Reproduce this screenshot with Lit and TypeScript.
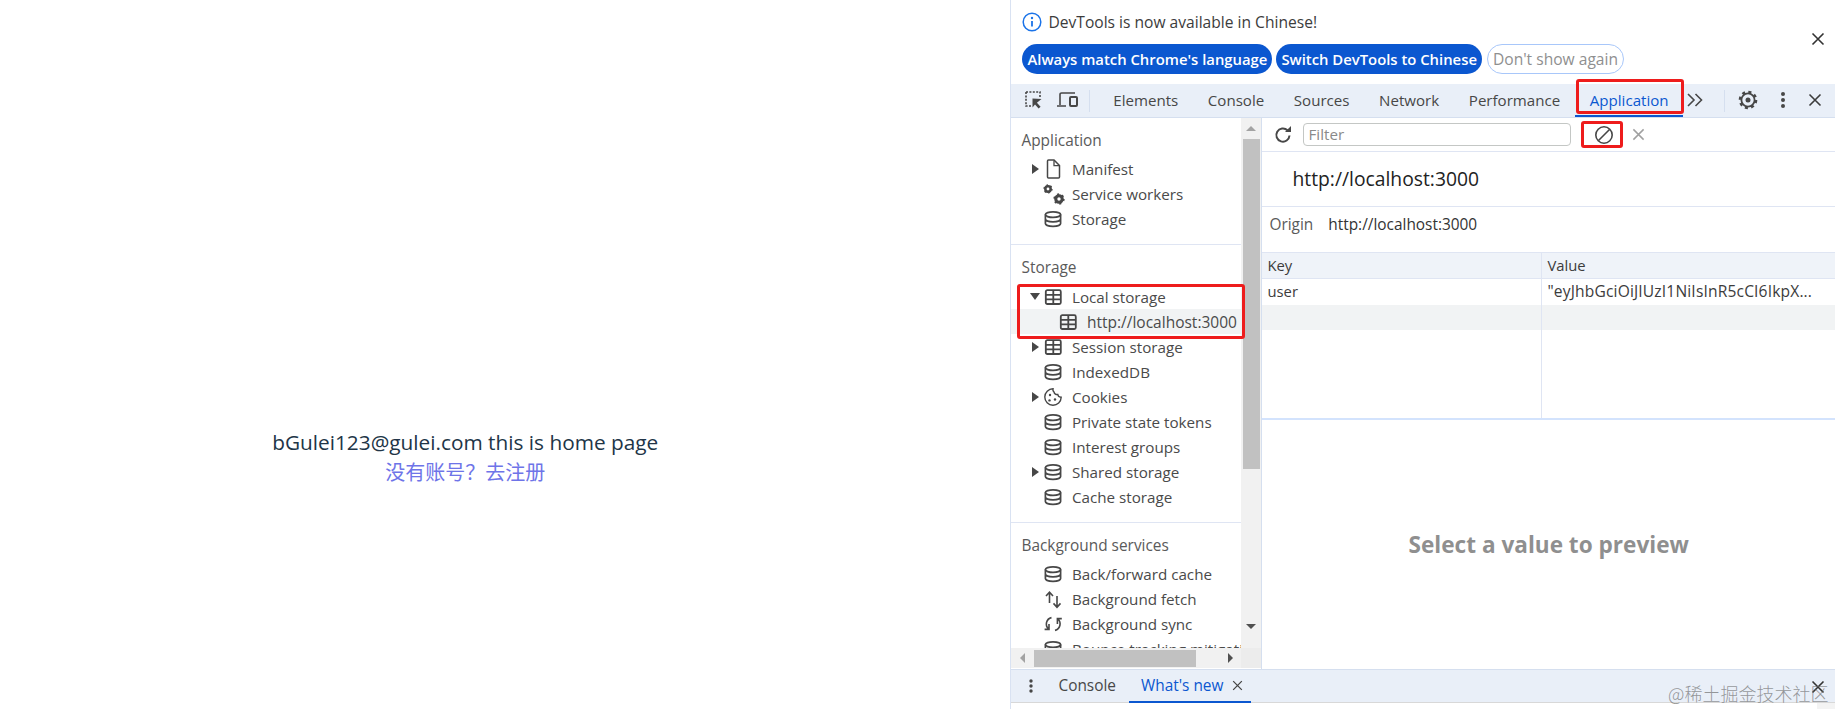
import { LitElement, html, css, svg } from "lit";
import { customElement } from "lit/decorators.js";

const s = "#474747";

const gear = (cx: number, cy: number, r: number, w: number) => svg`<circle cx=${cx} cy=${cy} r=${r * 0.58} fill="none" stroke=${s} stroke-width=${r * 0.55}/><circle cx=${cx} cy=${cy} r=${r * 0.85} fill="none" stroke=${s} stroke-width=${r * 0.32} stroke-dasharray=${`${w} ${r * 0.85 * 1.047 - w}`}/>`;

const db = svg`<ellipse cx="9" cy="4.6" rx="7.6" ry="2.8" fill="none" stroke=${s} stroke-width="1.7"/><path d="M1.4 4.6v9c0 1.5 3.4 2.8 7.6 2.8s7.6-1.3 7.6-2.8v-9M1.4 9.1c0 1.5 3.4 2.8 7.6 2.8s7.6-1.3 7.6-2.8" fill="none" stroke=${s} stroke-width="1.7"/>`;
const table = svg`<rect x="1.8" y="2.2" width="15" height="13.8" rx="1.5" fill="none" stroke=${s} stroke-width="1.8"/><path d="M1.8 6.9h15M1.8 11.4h15M9.3 2.2V16" stroke=${s} stroke-width="1.8"/>`;
const doc = svg`<path d="M4.5 0H10l5.5 5.5V17a1 1 0 0 1-1 1H4.5a1 1 0 0 1-1-1V1a1 1 0 0 1 1-1z" fill="none" stroke=${s} stroke-width="1.5"/><path d="M10 .5v5.2h5.2" fill="none" stroke=${s} stroke-width="1.3"/>`;
const gears = svg`${gear(4, 4, 4.6, 1.6)}${gear(15, 14, 5.6, 2)}`;
const cookie = svg`<path d="M9 .8a8.2 8.2 0 1 0 8.2 8.4 3.2 3.2 0 0 1-3.4-2.7 3.2 3.2 0 0 1-3.8-2.5A3.2 3.2 0 0 1 9 .8z" fill="none" stroke=${s} stroke-width="1.4"/><circle cx="6" cy="7" r="1.2" fill=${s}/><circle cx="5.5" cy="12.4" r="1.2" fill=${s}/><circle cx="11" cy="11.5" r="1.2" fill=${s}/>`;
const fetchIc = svg`<path d="M5.5 13V2.5M2 6l3.5-3.8L9 6M13 6v11M9.5 13.4l3.5 3.8 3.5-3.8" fill="none" stroke=${s} stroke-width="1.6"/>`;
const sync = svg`<path d="M7.5 2.6A6.6 6.6 0 0 0 4.6 14M5 9v5.4H.6M11 15.4A6.6 6.6 0 0 0 13.8 4M13.4 9V3.6h4.4" fill="none" stroke=${s} stroke-width="1.6"/>`;

const ic = (c: unknown) => html`<svg class="ic" width="18" height="18" viewBox="0 0 18 18">${c}</svg>`;
const xIcon = (cls: string) => html`<svg class=${cls} viewBox="0 0 14 14"><path d="M1.5 1.5l11 11M12.5 1.5l-11 11" fill="none" stroke="currentColor" stroke-width="1.6"/></svg>`;

interface Row { t: string; i: unknown; arrow?: "r" | "d"; }
const rows1: Row[] = [
  { t: "Manifest", i: doc, arrow: "r" },
  { t: "Service workers", i: gears },
  { t: "Storage", i: db },
];
const rows2: Row[] = [
  { t: "Session storage", i: table, arrow: "r" },
  { t: "IndexedDB", i: db },
  { t: "Cookies", i: cookie, arrow: "r" },
  { t: "Private state tokens", i: db },
  { t: "Interest groups", i: db },
  { t: "Shared storage", i: db, arrow: "r" },
  { t: "Cache storage", i: db },
];
const rows3: Row[] = [
  { t: "Back/forward cache", i: db },
  { t: "Background fetch", i: fetchIc },
  { t: "Background sync", i: sync },
  { t: "Bounce tracking mitigations", i: db },
];

@customElement("app-root")
export class AppRoot extends LitElement {
  static styles = css`
    :host { display: block; width: 1835px; height: 709px; overflow: hidden; position: relative; font-family: "Open Sans", "Noto Sans CJK SC", sans-serif; background: #fff; }
    .wrap { display: flex; height: 709px; }
    .page { width: 1011px; box-sizing: border-box; padding: 427px 80px 0 0; display: flex; flex-direction: column; align-items: center; }
    .page .a { font-size: 20.8px; line-height: 30px; color: #213547; white-space: nowrap; }
    .page .b { font-size: 20px; line-height: 30px; padding-top: 1px; color: #6e74e8; white-space: nowrap; }
    .dt { width: 824px; border-left: 1px solid #d9e2f2; display: flex; flex-direction: column; font-size: 14px; color: #474747; }
    .info { height: 84px; flex: none; box-sizing: border-box; padding: 12px 0 0 11px; position: relative; }
    .info .msg { display: flex; align-items: center; gap: 6px; height: 20px; font-size: 15.6px; color: #3c3c3c; }
    .btns { display: flex; gap: 4px; margin-top: 12px; }
    .btn { height: 30px; border-radius: 15px; background: #0b57d0; color: #fff; font-size: 14.85px; font-weight: 600; padding: 0 5px; display: flex; align-items: center; white-space: nowrap; box-sizing: border-box; }
    .btn.o { background: #fff; border: 1px solid #a8c7fa; color: #8f8f8f; font-weight: 400; font-size: 15.6px; padding: 0 5px; margin-left: 1px; }
    .info .x { position: absolute; right: 10px; top: 32px; width: 14px; height: 14px; color: #333; }
    .tabs { height: 34px; flex: none; box-sizing: border-box; background: #e9eff8; border-bottom: 1px solid #d5dfef; display: flex; align-items: center; position: relative; }
    .tool { display: flex; align-items: center; justify-content: center; flex: none; margin-bottom: 1px; }
    .tool .tx { width: 14px; height: 14px; color: #3c3c3c; }
    .sep { width: 1px; height: 22px; background: #d5dfef; flex: none; }
    .tab { padding: 0 14.8px 2px; height: 33px; display: flex; align-items: center; font-size: 15.1px; color: #474747; box-sizing: border-box; white-space: nowrap; flex: none; }
    .tab.on { color: #0b57d0; border-bottom: 2px solid #0b57d0; padding-bottom: 0; }
    .main { flex: 0 0 551px; height: 551px; display: flex; overflow: hidden; }
    .side { width: 250px; flex: none; display: flex; flex-direction: column; border-right: 1px solid #d5dfef; box-sizing: content-box; }
    .sidetop { display: flex; height: 530px; }
    .tree { width: 230px; height: 530px; overflow: hidden; flex: none; }
    .sec { border-bottom: 1px solid #dfe5f3; padding-bottom: 13px; }
    .sec.last { border: 0; }
    .sec h4 { margin: 0; padding: 11px 0 0 10px; height: 38px; box-sizing: border-box; font-weight: 400; font-size: 15.4px; color: #5a5a5a; line-height: 24px; }
    .sec.s2 h4 { height: 39px; }
    .row { height: 25px; display: flex; align-items: center; white-space: nowrap; font-size: 15.2px; color: #4a4a4a; padding-left: 21px; }
    .row.child { padding-left: 36px; background: #f1f3f4; font-size: 15.5px; }
    .row .arr { width: 12px; flex: none; display: flex; }
    .row .ic { flex: none; margin-right: 9.5px; overflow: visible; }
    .tri { width: 0; height: 0; border-top: 5px solid transparent; border-bottom: 5px solid transparent; border-left: 7px solid #474747; }
    .tri.d { border-left: 5px solid transparent; border-right: 5px solid transparent; border-top: 7px solid #474747; border-bottom: 0; margin-left: -2px; }
    .vbar { width: 20px; flex: none; background: #f1f1f1; display: flex; flex-direction: column; align-items: center; }
    .vbar .up { height: 21px; display: flex; align-items: center; }
    .vbar .thumb { width: 17px; height: 330px; background: #c1c1c1; }
    .vbar .sp { flex: 1; }
    .vbar .dn { height: 24px; display: flex; align-items: flex-start; }
    .t1 { width: 0; height: 0; border-left: 5px solid transparent; border-right: 5px solid transparent; border-bottom: 5px solid #a3a3a3; }
    .t2 { width: 0; height: 0; border-left: 5px solid transparent; border-right: 5px solid transparent; border-top: 5px solid #505050; }
    .hbar { height: 20px; background: #f1f1f1; display: flex; align-items: center; }
    .hbar .l { width: 23px; display: flex; justify-content: center; }
    .hbar .th { width: 162px; height: 17px; background: #c1c1c1; }
    .hbar .sp { width: 45px; display: flex; justify-content: flex-end; padding-right: 8px; box-sizing: border-box; }
    .hbar .cn { width: 20px; height: 20px; background: #ececec; }
    .tl { width: 0; height: 0; border-top: 5px solid transparent; border-bottom: 5px solid transparent; border-right: 5px solid #a3a3a3; }
    .tr { width: 0; height: 0; border-top: 5px solid transparent; border-bottom: 5px solid transparent; border-left: 5px solid #505050; }
    .pane { flex: 1; display: flex; flex-direction: column; min-width: 0; }
    .ptool { height: 34px; flex: none; box-sizing: border-box; border-bottom: 1px solid #dfe5f3; display: flex; align-items: center; padding-left: 11px; }
    .filter { margin-left: 10px; width: 268px; height: 23px; box-sizing: border-box; border: 1px solid #c4c7c5; border-radius: 4px; padding-left: 4px; font-size: 15.2px; line-height: 21px; color: #8a8a8a; }
    .ptool .block { margin-left: 23px; width: 20px; height: 20px; }
    .ptool .cx { margin-left: 18px; width: 13px; height: 13px; color: #a0a0a0; }
    .ptitle { height: 55px; flex: none; box-sizing: border-box; border-bottom: 1px solid #dfe5f3; padding: 0 0 2px 30px; display: flex; align-items: center; font-size: 19.3px; color: #222; }
    .origin { height: 45px; flex: none; display: flex; align-items: center; padding: 0 0 11px 7px; box-sizing: border-box; font-size: 15.4px; gap: 15px; color: #5a5a5a; }
    .origin span + span { color: #333; }
    .tbl { height: 168px; flex: none; box-sizing: border-box; border-bottom: 2px solid #d3e3fd; display: grid; grid-template-columns: 280px 1fr; grid-template-rows: 26px 26px 25px 1fr; border-top: 1px solid #dfe5f3; font-size: 14.8px; }
    .c { display: flex; align-items: center; padding: 0 0 2px 5px; box-sizing: border-box; color: #3c3c3c; white-space: nowrap; overflow: hidden; }
    .c.l { border-right: 1px solid #dfe5f3; }
    .c.h { background: #eff3f9; border-bottom: 1px solid #dfe5f3; }
    .c.g { background: #f1f3f4; }
    .c.v { font-size: 15.6px; letter-spacing: .15px; }
    .preview { flex: 1; display: flex; align-items: center; justify-content: center; font-size: 22.6px; font-weight: 700; color: #8f8f8f; box-sizing: border-box; white-space: nowrap; }
    .drawer { height: 34px; flex: none; box-sizing: border-box; background: #e9eff8; border-top: 1px solid #d5dfef; border-bottom: 1px solid #d8d8d8; display: flex; align-items: center; position: relative; }
    .drawer .dots { margin-left: 18px; width: 4px; height: 14px; }
    .drawer .dc { margin-left: 25px; font-size: 15.4px; color: #474747; padding-bottom: 2px; }
    .drawer .wn { margin-left: 13px; width: 122px; height: 33px; box-sizing: border-box; border-bottom: 2px solid #0b57d0; display: flex; align-items: center; padding-left: 12px; gap: 9px; font-size: 15.4px; color: #0b57d0; white-space: nowrap; }
    .drawer .wn svg { width: 11px; height: 11px; color: #444; }
    .drawer .dx { position: absolute; right: 10px; top: 10px; width: 14px; height: 14px; color: #333; }
    .strip { flex: 1; display: flex; justify-content: flex-end; }
    .strip div { width: 18px; background: #f3f3f3; }
    .mark { position: absolute; left: 1668px; top: 681px; font-size: 18px; line-height: 24px; color: rgba(110, 110, 110, .7); white-space: nowrap; font-family: "Noto Sans CJK SC", sans-serif; font-weight: 300; }
    .red { position: absolute; border: 3px solid #ee1c1c; border-radius: 3px; box-sizing: border-box; pointer-events: none; }
    .r1 { left: 1576px; top: 79px; width: 108px; height: 35px; }
    .r2 { left: 1581px; top: 121px; width: 42px; height: 27px; }
    .r3 { left: 1017px; top: 284px; width: 228px; height: 55px; }
  `;

  private row(r: Row) {
    return html`<div class="row"><span class="arr">${r.arrow ? html`<span class="tri ${r.arrow === "d" ? "d" : ""}"></span>` : ""}</span>${ic(r.i)}<span>${r.t}</span></div>`;
  }

  render() {
    return html`
      <div class="wrap">
        <div class="page">
          <div class="a">bGulei123@gulei.com this is home page</div>
          <div class="b">没有账号？去注册</div>
        </div>
        <div class="dt">
          <div class="info">
            <div class="msg">
              <svg width="20" height="20" viewBox="0 0 20 20"><circle cx="10" cy="10" r="8.8" fill="none" stroke="#1a73e8" stroke-width="1.5"/><path d="M10 9v5.5" stroke="#1a73e8" stroke-width="1.8"/><circle cx="10" cy="6" r="1.2" fill="#1a73e8"/></svg>
              <span>DevTools is now available in Chinese!</span>
            </div>
            <div class="btns">
              <div class="btn">Always match Chrome's language</div>
              <div class="btn">Switch DevTools to Chinese</div>
              <div class="btn o">Don't show again</div>
            </div>
            ${xIcon("x")}
          </div>
          <div class="tabs">
            <div class="tool" style="width:20px;margin-left:13px">
              <svg width="20" height="20" viewBox="0 0 20 20"><path d="M2 2h14v6M2 2v14h6" fill="none" stroke="#474747" stroke-width="1.6" stroke-dasharray="2 1.4"/><path d="M18 9.5L9 9v9l2.5-3 3.6 4 2-1.7-3.7-4z" transform="translate(-.5 -.5)" fill="#474747"/></svg>
            </div>
            <div class="tool" style="width:24px;margin-left:12px">
              <svg width="22" height="20" viewBox="0 0 22 20"><path d="M0 16h9M3 15V4.5A1.5 1.5 0 0 1 4.5 3H18" fill="none" stroke="#474747" stroke-width="1.6"/><rect x="13" y="7" width="7" height="9" rx="1" fill="none" stroke="#474747" stroke-width="2"/></svg>
            </div>
            <div class="sep" style="margin:0 8px 0 9px"></div>
            <div class="tab">Elements</div>
            <div class="tab">Console</div>
            <div class="tab">Sources</div>
            <div class="tab">Network</div>
            <div class="tab">Performance</div>
            <div class="tab on">Application</div>
            <div class="tool" style="width:16px;margin-left:4px">
              <svg width="16" height="14" viewBox="0 0 16 14"><path d="M1 1l6 6-6 6M8.5 1l6 6-6 6" fill="none" stroke="#474747" stroke-width="1.6"/></svg>
            </div>
            <div class="sep" style="margin-left:21px"></div>
            <div class="tool" style="width:20px;margin-left:13px">
              <svg width="20" height="20" viewBox="0 0 20 20"><circle cx="10" cy="10" r="6.6" fill="none" stroke="#474747" stroke-width="1.8"/><circle cx="10" cy="10" r="8" fill="none" stroke="#474747" stroke-width="2.6" stroke-dasharray="3 3.3"/><circle cx="10" cy="10" r="2.5" fill="#474747"/></svg>
            </div>
            <div class="tool" style="width:4px;margin-left:23px">
              <svg width="4" height="16" viewBox="0 0 4 16"><circle cx="2" cy="2" r="2" fill="#474747"/><circle cx="2" cy="8" r="2" fill="#474747"/><circle cx="2" cy="14" r="2" fill="#474747"/></svg>
            </div>
            <div class="tool" style="margin-left:23px">${xIcon("tx")}</div>
          </div>
          <div class="main">
            <div class="side">
              <div class="sidetop">
                <div class="tree">
                  <div class="sec"><h4>Application</h4>${rows1.map((r) => this.row(r))}</div>
                  <div class="sec s2"><h4>Storage</h4>
                    ${this.row({ t: "Local storage", i: table, arrow: "d" })}
                    <div class="row child"><span class="arr"></span>${ic(table)}<span>http://localhost:3000</span></div>
                    ${rows2.map((r) => this.row(r))}
                  </div>
                  <div class="sec last"><h4>Background services</h4>${rows3.map((r) => this.row(r))}</div>
                </div>
                <div class="vbar">
                  <div class="up"><div class="t1"></div></div>
                  <div class="thumb"></div>
                  <div class="sp"></div>
                  <div class="dn"><div class="t2"></div></div>
                </div>
              </div>
              <div class="hbar">
                <div class="l"><div class="tl"></div></div>
                <div class="th"></div>
                <div class="sp"><div class="tr"></div></div>
                <div class="cn"></div>
              </div>
            </div>
            <div class="pane">
              <div class="ptool">
                <svg width="20" height="20" viewBox="0 0 20 20"><path d="M16.5 10.5a6.6 6.6 0 1 1-2-5.2" fill="none" stroke="#474747" stroke-width="2"/><path d="M12 7h6V1z" fill="#474747"/></svg>
                <div class="filter">Filter</div>
                <svg class="block" viewBox="0 0 20 20"><circle cx="10" cy="10" r="8.2" fill="none" stroke="#474747" stroke-width="1.6"/><path d="M4.5 15.5l11-11" stroke="#474747" stroke-width="1.6"/></svg>
                ${xIcon("cx")}
              </div>
              <div class="ptitle">http://localhost:3000</div>
              <div class="origin"><span>Origin</span><span>http://localhost:3000</span></div>
              <div class="tbl">
                <div class="c l h">Key</div><div class="c h">Value</div>
                <div class="c l">user</div><div class="c v">"eyJhbGciOiJIUzI1NiIsInR5cCI6IkpX...</div>
                <div class="c l g"></div><div class="c g"></div>
                <div class="c l"></div><div class="c"></div>
              </div>
              <div class="preview">Select a value to preview</div>
            </div>
          </div>
          <div class="drawer">
            <svg class="dots" viewBox="0 0 4 14"><circle cx="2" cy="2" r="1.7" fill="#474747"/><circle cx="2" cy="7" r="1.7" fill="#474747"/><circle cx="2" cy="12" r="1.7" fill="#474747"/></svg>
            <div class="dc">Console</div>
            <div class="wn"><span>What's new</span>${xIcon("")}</div>
            ${xIcon("dx")}
          </div>
          <div class="strip"><div></div></div>
        </div>
      </div>
      <div class="mark">@稀土掘金技术社区</div>
      <div class="red r1"></div>
      <div class="red r2"></div>
      <div class="red r3"></div>
    `;
  }
}
